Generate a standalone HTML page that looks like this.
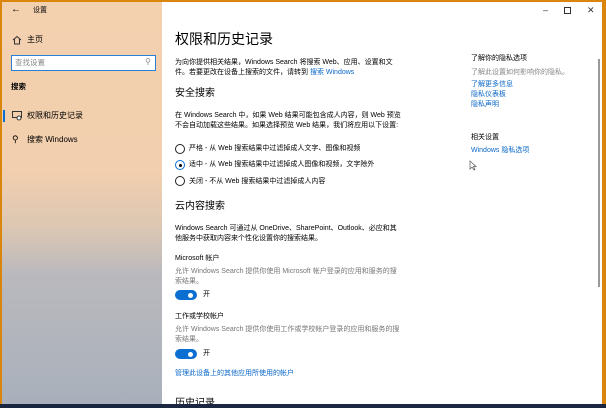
<!DOCTYPE html><html><head><meta charset="utf-8"><style>
*{margin:0;padding:0;box-sizing:border-box}
body{width:606px;height:408px;overflow:hidden;background:#d9850e;position:relative;font-family:"Liberation Sans","Noto Sans CJK SC",sans-serif;color:#000}
.win{position:absolute;left:2px;top:2px;width:600px;height:402px;background:#fff;overflow:hidden}
.side{position:absolute;left:0;top:0;width:160px;height:402px;background:linear-gradient(180deg,#f3d1af 0%,#f2cfae 42%,#dcc7b3 56%,#b9b9bd 68%,#a9b0bb 100%)}
.t{position:absolute;white-space:nowrap;font-size:7.5px;line-height:10px}
.g{color:#777}.b{color:#0a68c8}
.radio{position:absolute;width:10px;height:10px;border:1px solid #222;border-radius:50%}
.tog{position:absolute;width:22px;height:10px;border-radius:5px;background:#0b6fd1}
.tog:after{content:"";position:absolute;right:4px;top:2.5px;width:5px;height:5px;border-radius:50%;background:#fff}
.bottom{position:absolute;left:0;top:404px;width:606px;height:4px;background:#1b2740}
</style></head><body>
<div class="win">
<div class="side">
 <div class="t" style="left:9px;top:3px;font-size:10px">&#8592;</div>
 <div class="t" style="left:31px;top:4px;font-size:7px">设置</div>
 <svg style="position:absolute;left:10px;top:33px" width="10" height="10"><path d="M1 5 L5 1.5 L9 5 M2.5 4 V9 H7.5 V4" fill="none" stroke="#333" stroke-width="1"/></svg>
 <div class="t" style="left:25px;top:33px;font-size:8px">主页</div>
 <div style="position:absolute;left:9px;top:53px;width:145px;height:16px;border:1px solid #2a7fd4;background:#fff"></div>
 <div class="t g" style="left:13px;top:56px;font-size:7.5px;color:#888">查找设置</div>
 <div class="t" style="left:143px;top:55px;font-size:8px;color:#888">&#9906;</div>
 <div class="t" style="left:9px;top:80px;font-weight:bold;font-size:7.5px">搜索</div>
 <div style="position:absolute;left:1px;top:108px;width:2px;height:12px;background:#0b6fd1"></div>
 <svg style="position:absolute;left:10px;top:109px" width="11" height="10"><rect x="0.5" y="0.5" width="9" height="6" fill="none" stroke="#333"/><circle cx="7" cy="7" r="2" fill="#fff" stroke="#333"/></svg>
 <div class="t" style="left:25px;top:109px;font-size:8px">权限和历史记录</div>
 <div class="t" style="left:10px;top:132px;font-size:9px">&#9906;</div>
 <div class="t" style="left:25px;top:133px;font-size:8px">搜索 Windows</div>
</div>
<div class="t" style="left:541px;top:3px;font-size:9px;color:#333">&#8211;</div>
<div style="position:absolute;left:562px;top:5px;width:7px;height:7px;border:1px solid #333"></div>
<div class="t" style="left:585px;top:3px;font-size:9px;color:#333">&#10005;</div>
<div style="position:absolute;left:596px;top:57px;width:2px;height:228px;background:#999"></div>

<div class="t" style="left:173px;top:28px;font-size:14px;line-height:18px">权限和历史记录</div>
<div class="t" style="left:173px;top:56px;font-size:7px">为向你提供相关结果，Windows Search 将搜索 Web、应用、设置和文</div>
<div class="t" style="left:173px;top:66px;font-size:7px">件。若要更改在设备上搜索的文件，请转到 <span class="b">搜索 Windows</span></div>
<div class="t" style="left:173px;top:85px;font-size:10px;line-height:13px">安全搜索</div>
<div class="t" style="left:173px;top:109px;font-size:7px">在 Windows Search 中，如果 Web 结果可能包含成人内容，则 Web 预览</div>
<div class="t" style="left:173px;top:119px;font-size:7px">不会自动加载这些结果。如果选择预览 Web 结果，我们将应用以下设置:</div>
<div class="radio" style="left:173px;top:142px"></div>
<div class="t" style="left:187px;top:142px;font-size:7px">严格 - 从 Web 搜索结果中过滤掉成人文字、图像和视频</div>
<div class="radio" style="left:173px;top:158px;border-color:#0b6fd1"><div style="position:absolute;left:2.5px;top:2.5px;width:3px;height:3px;border-radius:50%;background:#000"></div></div>
<div class="t" style="left:187px;top:158px;font-size:7px">适中 - 从 Web 搜索结果中过滤掉成人图像和视频，文字除外</div>
<div class="radio" style="left:173px;top:174px"></div>
<div class="t" style="left:187px;top:175px;font-size:7px">关闭 - 不从 Web 搜索结果中过滤掉成人内容</div>
<div class="t" style="left:173px;top:198px;font-size:10px;line-height:13px">云内容搜索</div>
<div class="t" style="left:173px;top:222px;font-size:7px">Windows Search 可通过从 OneDrive、SharePoint、Outlook、必应和其</div>
<div class="t" style="left:173px;top:232px;font-size:7px">他服务中获取内容来个性化设置你的搜索结果。</div>
<div class="t" style="left:173px;top:252px;font-size:7px">Microsoft 帐户</div>
<div class="t g" style="left:173px;top:265px;font-size:7px">允许 Windows Search 提供你使用 Microsoft 帐户登录的应用和服务的搜</div>
<div class="t g" style="left:173px;top:275px;font-size:7px">索结果。</div>
<div class="tog" style="left:173px;top:288px"></div>
<div class="t" style="left:201px;top:288px;font-size:7px">开</div>
<div class="t" style="left:173px;top:310px;font-size:7px">工作或学校帐户</div>
<div class="t g" style="left:173px;top:323px;font-size:7px">允许 Windows Search 提供你使用工作或学校帐户登录的应用和服务的搜</div>
<div class="t g" style="left:173px;top:333px;font-size:7px">索结果。</div>
<div class="tog" style="left:173px;top:347px"></div>
<div class="t" style="left:201px;top:347px;font-size:7px">开</div>
<div class="t b" style="left:173px;top:367px;font-size:7px">管理此设备上的其他应用所使用的帐户</div>
<div class="t" style="left:173px;top:395px;font-size:10px;line-height:13px">历史记录</div>

<div class="t" style="left:469px;top:52px;font-size:7px">了解你的隐私选项</div>
<div class="t g" style="left:469px;top:66px;font-size:7px;color:#888">了解此设置如何影响你的隐私。</div>
<div class="t b" style="left:469px;top:78px;font-size:7px">了解更多信息</div>
<div class="t b" style="left:469px;top:88px;font-size:7px">隐私仪表板</div>
<div class="t b" style="left:469px;top:98px;font-size:7px">隐私声明</div>
<div class="t" style="left:469px;top:131px;font-size:7px">相关设置</div>
<div class="t b" style="left:469px;top:144px;font-size:7px">Windows 隐私选项</div>
<svg style="position:absolute;left:467px;top:158px" width="8" height="11"><path d="M1 1 L1 9 L3 7 L5 10 L6 9.5 L4.5 6.5 L7 6.5 Z" fill="#fff" stroke="#555" stroke-width="0.7"/></svg>
</div>
<div class="bottom"></div>
</body></html>
